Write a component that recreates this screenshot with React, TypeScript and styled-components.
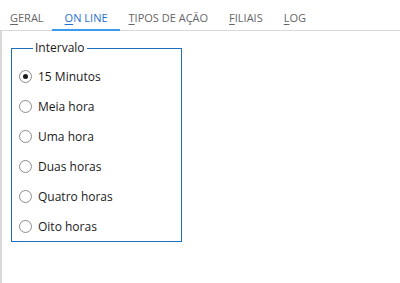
import React, { useState } from 'react';
import styled, { createGlobalStyle } from 'styled-components';

const GlobalStyle = createGlobalStyle`
  html, body {
    margin: 0;
    padding: 0;
    background: #ffffff;
  }
  body {
    font-family: 'Open Sans', 'Noto Sans', sans-serif;
    font-size: 12px;
    color: #1a1a1a;
  }
`;

const Page = styled.div`
  width: 400px;
  height: 283px;
  display: flex;
  flex-direction: column;
`;

const TabBar = styled.div`
  height: 30px;
  display: flex;
  align-items: stretch;
  border-bottom: 1px solid #d9d9d9;
  box-sizing: content-box;
`;

const Tab = styled.div<{ $active?: boolean }>`
  position: relative;
  display: flex;
  align-items: center;
  padding: 5px 10.5px 0;
  font-size: 11px;
  color: ${(p) => (p.$active ? '#1f6fd0' : '#666666')};

  &:first-child {
    padding-left: 10px;
  }

  ${(p) =>
    p.$active &&
    `
    &::after {
      content: '';
      position: absolute;
      left: -2px;
      right: -2px;
      bottom: -1px;
      height: 2px;
      background: #3c9af0;
    }
  `}

  u {
    text-decoration: underline;
    text-underline-offset: 2px;
  }
`;

const Content = styled.div`
  flex: 1;
  border-left: 2px solid #d9d9d9;
  padding: 9px 0 0 9px;
`;

const Group = styled.fieldset`
  margin: 0;
  width: 171px;
  min-width: 0;
  box-sizing: border-box;
  border: 1px solid #1a6fc0;
  padding: 0 0 0 7px;
`;

const Legend = styled.legend`
  margin-left: 14px;
  padding: 0 2px;
  font-size: 12px;
  line-height: 16px;
  color: #1a1a1a;
`;

const Options = styled.div`
  padding-top: 5px;
  display: flex;
  flex-direction: column;
`;

const Option = styled.label`
  height: 30px;
  display: flex;
  align-items: center;
  gap: 6px;
  padding-top: 1px;
  box-sizing: border-box;
  font-size: 12px;
  cursor: default;
`;

const Circle = styled.span<{ $checked: boolean }>`
  width: 13px;
  height: 13px;
  box-sizing: border-box;
  border: 1px solid #8c8c8c;
  border-radius: 50%;
  display: flex;
  align-items: center;
  justify-content: center;
  flex-shrink: 0;

  &::after {
    content: '';
    width: 5px;
    height: 5px;
    border-radius: 50%;
    background: ${(p) => (p.$checked ? '#1a1a1a' : 'transparent')};
  }
`;

const tabs = [
  { key: 'geral', first: 'G', rest: 'ERAL' },
  { key: 'online', first: 'O', rest: 'N LINE' },
  { key: 'tipos', first: 'T', rest: 'IPOS DE AÇÃO' },
  { key: 'filiais', first: 'F', rest: 'ILIAIS' },
  { key: 'log', first: 'L', rest: 'OG' },
];

const options = ['15 Minutos', 'Meia hora', 'Uma hora', 'Duas horas', 'Quatro horas', 'Oito horas'];

export default function App() {
  const [selected, setSelected] = useState(0);

  return (
    <Page>
      <GlobalStyle />
      <TabBar>
        {tabs.map((t) => (
          <Tab key={t.key} $active={t.key === 'online'}>
            <span>
              <u>{t.first}</u>
              {t.rest}
            </span>
          </Tab>
        ))}
      </TabBar>
      <Content>
        <Group>
          <Legend>Intervalo</Legend>
          <Options>
            {options.map((o, i) => (
              <Option key={o} onClick={() => setSelected(i)}>
                <Circle $checked={selected === i} />
                {o}
              </Option>
            ))}
          </Options>
        </Group>
      </Content>
    </Page>
  );
}
